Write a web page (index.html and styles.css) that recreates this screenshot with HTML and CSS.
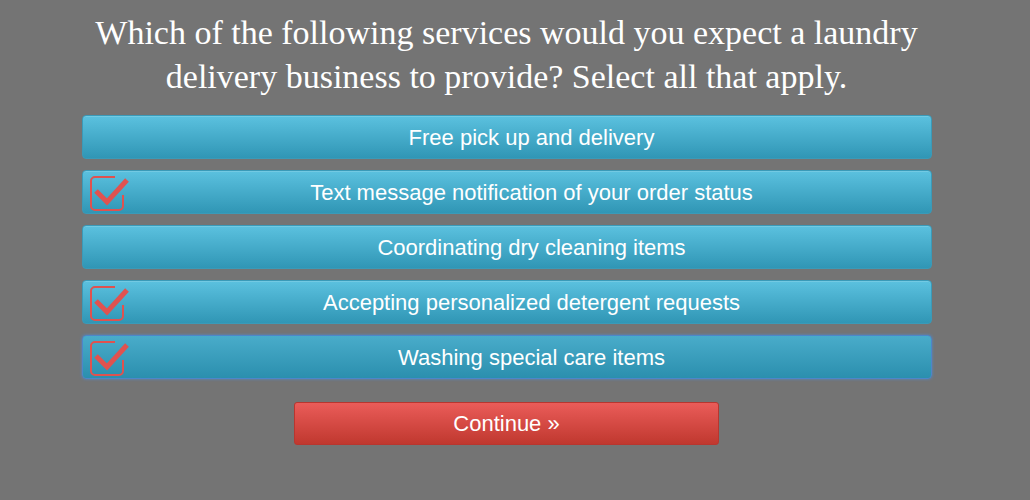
FILE: index.html
```html
<!DOCTYPE html>
<html lang="en">
<head>
    <meta charset="UTF-8">
    <meta name="viewport" content="width=device-width, initial-scale=1.0">
    <title>Laundry Delivery Survey</title>
    <link rel="stylesheet" href="styles.css">
</head>
<body>
    <div class="container">
        <h1 class="question">Which of the following services would you expect a laundry delivery business to provide? Select all that apply.</h1>

        <div class="options">
            <button class="option">Free pick up and delivery</button>
            <button class="option checked">
                <svg class="tick" viewBox="0 0 42 38" width="42" height="38"><path d="M27 3 H7 a4 4 0 0 0 -4 4 V32 a4 4 0 0 0 4 4 H31 a4 4 0 0 0 4 -4 V21" fill="none" stroke="#e0524f" stroke-width="2"/><path d="M8 17 L19 28 L39 6" fill="none" stroke="#e0524f" stroke-width="5"/></svg>
                Text message notification of your order status
            </button>
            <button class="option">Coordinating dry cleaning items</button>
            <button class="option checked">
                <svg class="tick" viewBox="0 0 42 38" width="42" height="38"><path d="M27 3 H7 a4 4 0 0 0 -4 4 V32 a4 4 0 0 0 4 4 H31 a4 4 0 0 0 4 -4 V21" fill="none" stroke="#e0524f" stroke-width="2"/><path d="M8 17 L19 28 L39 6" fill="none" stroke="#e0524f" stroke-width="5"/></svg>
                Accepting personalized detergent requests
            </button>
            <button class="option checked active">
                <svg class="tick" viewBox="0 0 42 38" width="42" height="38"><path d="M27 3 H7 a4 4 0 0 0 -4 4 V32 a4 4 0 0 0 4 4 H31 a4 4 0 0 0 4 -4 V21" fill="none" stroke="#e0524f" stroke-width="2"/><path d="M8 17 L19 28 L39 6" fill="none" stroke="#e0524f" stroke-width="5"/></svg>
                Washing special care items
            </button>
        </div>

        <div class="actions">
            <button class="continue">Continue &raquo;</button>
        </div>
    </div>
</body>
</html>
```

FILE: styles.css
```css
body {
    margin: 0;
    padding: 0 17px 0 0;
    background-color: #747474;
    font-family: "Liberation Sans", Arial, sans-serif;
}
.container {
    width: 850px;
    margin: 0 auto;
}
.question {
    margin: 0;
    padding: 11px 0 16px;
    font-family: "Liberation Serif", Georgia, serif;
    font-weight: normal;
    font-size: 34px;
    line-height: 44px;
    color: #fff;
    text-align: center;
}
.options {
    display: flex;
    flex-direction: column;
    gap: 11px;
}
.option {
    position: relative;
    height: 44px;
    padding: 2px 0 0 50px;
    font-family: inherit;
    font-size: 22px;
    color: #fff;
    background: linear-gradient(#5bc1df, #3096b5);
    border: 1px solid #3a9ab8;
    border-radius: 4px;
    box-shadow: inset 0 1px 0 rgba(255, 255, 255, 0.15);
    cursor: pointer;
}
.option.active {
    background: linear-gradient(#49acca, #2b8fae);
    border-color: #4d86c9;
    box-shadow: 0 0 3px #4f8ad0;
}
.tick {
    position: absolute;
    left: 5px;
    top: 3px;
}
.actions {
    display: flex;
    justify-content: center;
    margin-top: 23px;
}
.continue {
    width: 425px;
    height: 43px;
    padding-top: 2px;
    font-family: inherit;
    font-size: 22px;
    color: #fff;
    background: linear-gradient(#ea5c59, #c0382f);
    border: 1px solid #b8362f;
    border-radius: 3px;
    cursor: pointer;
}
```
